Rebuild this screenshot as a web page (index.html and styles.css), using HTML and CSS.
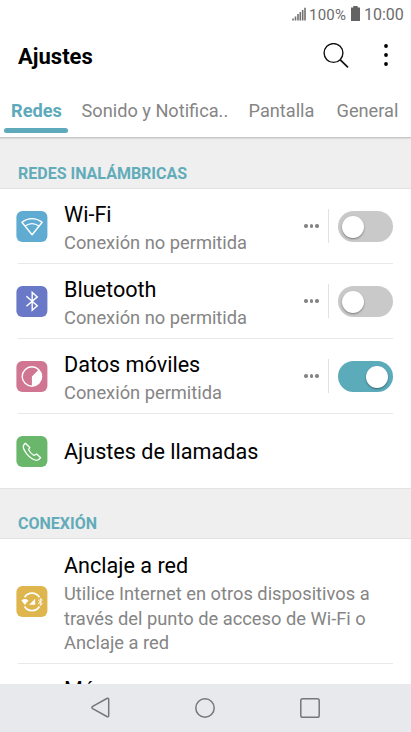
FILE: index.html
```html
<!DOCTYPE html>
<html lang="es">
<head>
<meta charset="utf-8">
<title>Ajustes</title>
<link rel="stylesheet" href="styles.css">
</head>
<body>
<div class="phone">
  <div class="status">
    <svg class="signal" width="14" height="14" viewBox="0 0 14 14"><path d="M1 13.5v-2M3.5 13.5V9.5M6 13.5V7M8.3 13.5V5M10.7 13.5V3M13 13.5V.8" stroke="#707070" stroke-width="1.6"/></svg>
    <span class="percent">100%</span>
    <svg class="battery" width="9" height="15" viewBox="0 0 9 15"><path d="M2.3 0h4.4v1.5H9V15H0V1.5h2.3z" fill="#636363"/></svg>
    <span class="clock">10:00</span>
  </div>
  <header class="header">
    <h1>Ajustes</h1>
    <svg width="26" height="26" viewBox="0 0 26 26" fill="none" stroke="#111" stroke-width="1.4"><circle cx="10.5" cy="10" r="9.4"/><path d="M17.3 16.8l7.7 7.5" stroke-width="1.7"/></svg>
    <svg class="more" width="6" height="24" viewBox="0 0 6 24"><circle cx="3" cy="2" r="1.9"/><circle cx="3" cy="11" r="1.9"/><circle cx="3" cy="20" r="1.9"/></svg>
  </header>
  <nav class="tabs">
    <span class="tab active">Redes</span>
    <span class="tab sound">Sonido y Notifica..</span>
    <span class="tab display">Pantalla</span>
    <span class="tab general">General</span>
  </nav>
  <main>
    <h2 class="first">REDES INALÁMBRICAS</h2>
    <section>
      <div class="row">
        <div class="icon wifi"><svg width="31" height="31" viewBox="0 0 31 31" fill="none" stroke="#fff" stroke-width="1.4" stroke-linejoin="round"><path d="M5.5 11.2Q15.5 4 25.8 11.2L15.7 23.7z"/><path d="M8.8 15Q15.6 10.2 22.5 15"/></svg></div>
        <div class="text"><div class="name">Wi-Fi</div><div class="desc">Conexión no permitida</div></div>
        <div class="dots"><i></i><i></i><i></i></div>
        <div class="switch"></div>
      </div>
      <div class="row">
        <div class="icon bluetooth"><svg width="31" height="31" viewBox="0 0 31 31" fill="none" stroke="#fff" stroke-width="1.4"><path d="M10 10.3l10.9 9.5-5.1 4.4V6.4l5.1 4.5L10 20.2"/></svg></div>
        <div class="text"><div class="name">Bluetooth</div><div class="desc">Conexión no permitida</div></div>
        <div class="dots"><i></i><i></i><i></i></div>
        <div class="switch"></div>
      </div>
      <div class="row">
        <div class="icon data"><svg width="31" height="31" viewBox="0 0 31 31"><circle cx="15.5" cy="15.5" r="9.7" fill="none" stroke="#fff" stroke-width="1.4"/><path d="M15.5 15.5L22.2 8.8A9.5 9.5 0 0 1 15.5 25z" fill="#fff"/></svg></div>
        <div class="text"><div class="name">Datos móviles</div><div class="desc">Conexión permitida</div></div>
        <div class="dots"><i></i><i></i><i></i></div>
        <div class="switch on"></div>
      </div>
      <div class="row single">
        <div class="icon calls"><svg width="31" height="31" viewBox="0 0 31 31" fill="none" stroke="#fff" stroke-width="1.3" stroke-linejoin="round"><path d="M9 7.3L7.2 9.2C6.4 10.7 7.1 13.5 10.4 17.9C13.8 22.1 17.3 24.1 20.4 24.3C22 24.3 23.4 22.9 24.3 21.7L20.2 18C18.9 18.4 18.2 19.8 17.3 19.3C15.8 18.4 13.3 15.7 12.3 14C11.9 13.1 13.2 12.7 13.4 11.4Z"/></svg></div>
        <div class="text"><div class="name">Ajustes de llamadas</div></div>
      </div>
    </section>
    <h2>CONEXIÓN</h2>
    <section>
      <div class="row tall">
        <div class="icon tether"><svg width="31" height="31" viewBox="0 0 31 31"><path d="M8.2 11.2A8.7 8.7 0 0 1 23 11.2M8.2 20.5A8.7 8.7 0 0 0 23 20.5" fill="none" stroke="#fff" stroke-width="1.7"/><path d="M5 14.4Q8.4 11.8 12 14.4L8.5 18.9zM18.7 12.8v6h-6z" fill="#fff"/><path d="M21.6 13.7l4.3 4-2 1.8v-7.2l2 1.8-4.3 3.9" fill="none" stroke="#fff" stroke-width=".9"/></svg></div>
        <div class="text"><div class="name">Anclaje a red</div><div class="desc">Utilice Internet en otros dispositivos a<br>través del punto de acceso de Wi-Fi o<br>Anclaje a red</div></div>
      </div>
      <div class="row next"><div class="text"><div class="name">Más</div></div></div>
    </section>
  </main>
  <footer class="navbar">
    <svg width="20" height="22" viewBox="0 0 20 22"><path d="M1.7 9.4L15.8 1.5Q17.7 .6 17.7 2.5V18.5Q17.7 20.4 15.8 19.5L1.7 11.6Q.1 10.5 1.7 9.4Z"/></svg>
    <svg width="22" height="22" viewBox="0 0 22 22"><circle cx="11" cy="11" r="9.2"/></svg>
    <svg width="22" height="22" viewBox="0 0 22 22"><rect x="1.8" y="1.8" width="18.4" height="18.4" rx="1.8"/></svg>
  </footer>
</div>
</body>
</html>
```
FILE: styles.css
```css
* { box-sizing: border-box; }
body { margin: 0; font-family: Roboto, sans-serif; background: #fff; }
.phone { width: 411px; height: 732px; display: flex; flex-direction: column; overflow: hidden; }
svg { display: block; flex: none; }
.status { height: 28px; flex: none; display: flex; justify-content: flex-end; align-items: center; padding-right: 7px; color: #6c6c6c; font-size: 16px; line-height: 28px; white-space: nowrap; }
.signal, .battery { margin-bottom: 1px; }
.percent { width: 38px; margin: 1px 4px 0 3px; font-size: 15px; letter-spacing: .2px; }
.clock { width: 40px; margin: 2px 0 0 4px; }
.header { height: 56px; flex: none; display: flex; align-items: center; padding: 0 22px 0 18px; }
h1 { margin: 1px auto 0 0; font-size: 22px; line-height: 30px; font-weight: 700; color: #000; }
.more { margin: 0 0 1px 34px; }
.tabs { height: 54px; flex: none; display: flex; padding-left: 4px; border-bottom: 1px solid #c6c6c6; box-shadow: 0 1px 1px #ddd; position: relative; color: #858585; font-size: 18.2px; line-height: 54px; white-space: nowrap; }
.tab { flex: none; }
.active { width: 65px; height: 49px; padding-left: 7px; color: #5eaaba; font-weight: 700; position: relative; }
.active::after { content: ""; position: absolute; left: 0; bottom: 0; width: 64px; height: 5px; border-radius: 2.5px; background: #5eaaba; }
.sound { width: 167px; margin-left: 12.5px; }
.display { width: 88px; }
main { flex: 1; min-height: 0; overflow: hidden; }
h2 { margin: 0; height: 51px; padding: 21px 18px 0; font-size: 16px; line-height: 28px; font-weight: 700; color: #62acba; background: #efefef; border-top: 1px solid #e4e4e4; border-bottom: 1px solid #e2e2e2; }
.first { border-top-color: #efefef; }
.row { height: 75px; padding: 0 18px 0 16px; display: flex; align-items: center; background: linear-gradient(#e8e8e8, #e8e8e8) 18px 100% / 375px 1px no-repeat; }
.icon { width: 31px; height: 31px; flex: none; border-radius: 6px; margin: 0 17px 0 0; transform: translateX(.4px); }
.wifi { background: #60abd1; }
.bluetooth { background: #6979c7; }
.data { background: #d07693; }
.calls { background: #6ab76c; }
.tether { background: #dfb64d; }
.text { flex: 1; white-space: nowrap; padding-top: 2px; }
.name { font-size: 21.6px; line-height: 30px; color: #000; }
.desc { font-size: 18.3px; line-height: 24.5px; color: #858585; padding-top: 1px; }
.row:not(.tall) .desc { padding-top: 1px; margin-bottom: -1px; }
.tall .text { padding-top: 4px; }
.dots { display: flex; gap: 2px; margin: 0 9.5px 1px 0; }
.dots i { width: 3.5px; height: 3.5px; border-radius: 50%; background: #858585; }
.switch { width: 65px; height: 34px; border-left: 1px solid #e2e2e2; padding: 2px 0 0 9px; margin-bottom: 1px; position: relative; }
.switch::before { content: ""; display: block; height: 31px; border-radius: 16px; background: #c9c9c9; }
.switch::after { content: ""; position: absolute; left: 13px; top: 6.5px; width: 22px; height: 22px; border-radius: 50%; background: #fff; box-shadow: 0 1px 2px #0006; }
.on::before { background: #5babbb; }
.on::after { left: 37px; }
.single { height: 74px; background: none; }
.tall { height: 125px; }
.next { align-items: flex-start; padding: 9px 0 0 64px; background: none; }
.navbar { height: 48px; flex: none; background: #e8e9ed; display: flex; align-items: center; justify-content: space-between; padding: 0 90px 0 91px; }
.navbar svg { fill: none; stroke: #777; stroke-width: 1.5; }
```
